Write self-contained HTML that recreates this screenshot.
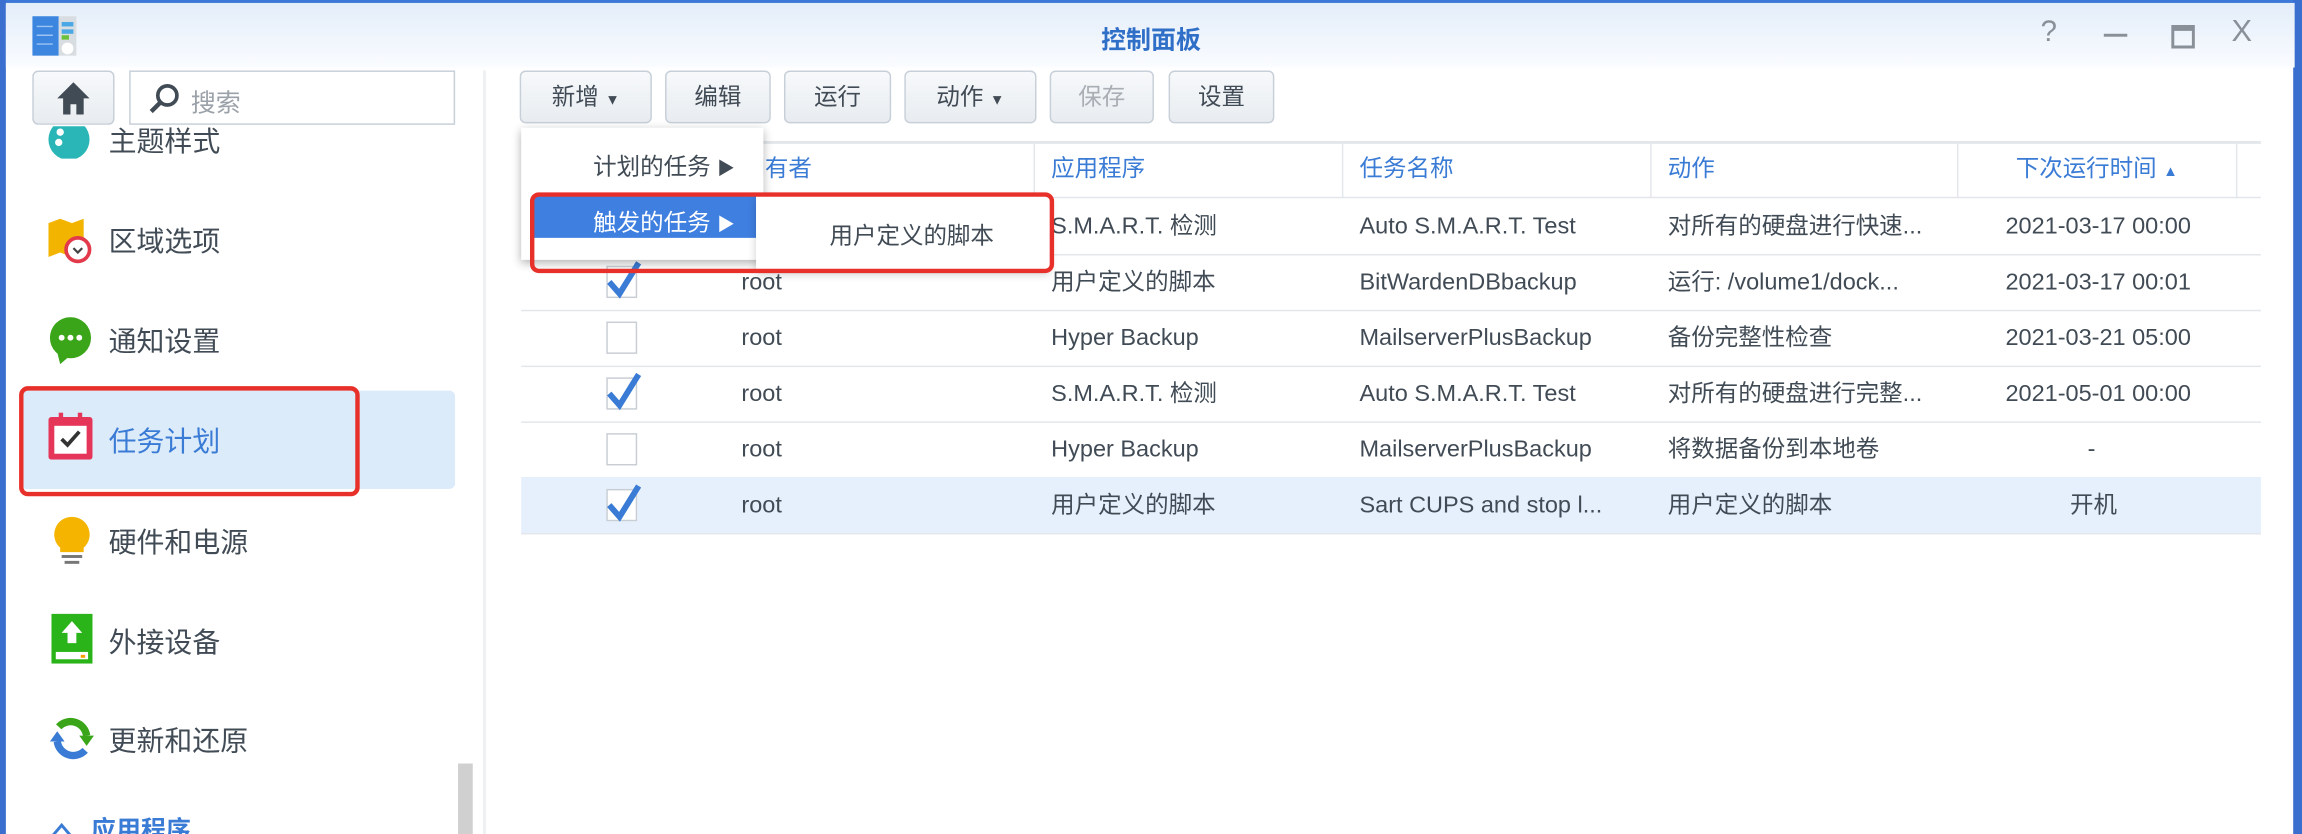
<!DOCTYPE html>
<html><head><meta charset="utf-8"><style>
html,body{margin:0;padding:0;width:2302px;height:834px;overflow:hidden;background:#fff}
#s{position:absolute;left:0;top:0;width:1568px;height:568px;transform:scale(1.46811,1.46831);transform-origin:0 0;font-family:"Liberation Sans","Noto Sans CJK SC",sans-serif;color:#414b55;background:#fff;overflow:hidden}
.a{position:absolute}
.tb{position:absolute;top:2px;left:4px;right:5px;height:44px;background:linear-gradient(#e3edf9,#fafcff)}
.btn{position:absolute;top:48px;height:36px;border:1px solid #c7cfd8;border-radius:4px;background:linear-gradient(#f7f9fb,#e8ecf0);font-size:16px;line-height:36px;text-align:center;color:#414b55;box-sizing:border-box}
.side{position:absolute;left:74px;font-size:19px;color:#414b55}
.hd{position:absolute;top:97px;height:38px;line-height:38px;font-size:16px;color:#3a7bd5}
.row{position:absolute;left:355px;width:1185px;height:38px;border-bottom:1px solid #e3e7eb;font-size:16px;line-height:40px}
.row span{position:absolute;white-space:nowrap}
.cb{position:absolute;left:58px;top:8px;width:21px;height:22px;border:1px solid #c8ced4;background:#fff;box-sizing:border-box}
.ck{position:absolute;left:56px;top:3px}
</style></head><body><div id="s">
<div class="a" style="left:0;top:0;width:1568px;height:3px;background:#3b78d8"></div>
<div class="a" style="left:0;top:0;width:4px;height:568px;background:#3a6fd0"></div>
<div class="a" style="right:0;top:0;width:6px;height:568px;background:#3a6fd0"></div>
<div class="tb"></div>
<svg class="a" style="left:22px;top:11px" width="32" height="27" viewBox="0 0 32 27"><rect x="0" y="0" width="18" height="27" fill="#3d86e0"/><rect x="18" y="0" width="12" height="27" fill="#d8dde2"/><rect x="20" y="4" width="8" height="3" fill="#4aa8e6"/><rect x="20" y="9" width="8" height="3" fill="#4aa8e6"/><rect x="20" y="13" width="5" height="3" fill="#6ac13c"/><circle cx="24" cy="22" r="4" fill="#fff"/><path d="M3 7h11M3 13h11M3 19h11" stroke="#9cc3f2" stroke-width="1"/></svg>
<div class="a" style="left:0;width:1568px;top:13px;text-align:center;font-size:17px;font-weight:bold;color:#2f6fc7">控制面板</div>
<div class="a" style="left:1390px;top:11px;font-size:20px;color:#8a9097">?</div>
<div class="a" style="left:1433px;top:23px;width:16px;height:2px;background:#8a9097"></div>
<div class="a" style="left:1479px;top:17px;width:12px;height:10px;border:2px solid #8a9097;border-top-width:4px"></div>
<div class="a" style="left:1520px;top:10px;font-size:21px;color:#8a9097">X</div>

<!-- sidebar -->
<div class="btn" style="left:22px;width:56px;top:48px;height:37px"><svg width="24" height="26" viewBox="0 0 24 26" style="margin-top:5px"><path d="M12 2L1 13h4v11h5v-7h4v7h5V13h4z" fill="#414b55"/></svg></div>
<div class="a" style="left:88px;top:48px;width:222px;height:37px;border:1px solid #c7cfd8;box-sizing:border-box;background:#fff"></div>
<svg class="a" style="left:100px;top:55px" width="24" height="24" viewBox="0 0 24 24"><circle cx="14" cy="10" r="6.5" fill="none" stroke="#414b55" stroke-width="2.5"/><path d="M9 15l-6 6" stroke="#414b55" stroke-width="3"/></svg>
<div class="a" style="left:130px;top:56px;font-size:17px;color:#9aa1a8">搜索</div>
<div class="a" style="left:12px;top:86px;width:300px;height:22px;overflow:hidden"><svg class="a" style="left:20px;top:-6px" width="30" height="30"><circle cx="15" cy="15" r="14" fill="#2ab5b6"/><circle cx="9" cy="10" r="2.5" fill="#fff"/><circle cx="8" cy="17" r="2.5" fill="#fff"/></svg><div class="a" style="left:62px;top:-4px;font-size:19px">主题样式</div></div>
<svg class="a" style="left:33px;top:148px" width="30" height="32"><path d="M0 4l8-3 8 3 8-3v16a8 8 0 0 0-8 8v2l-8-3-8 3z" fill="#f3b400"/><circle cx="20" cy="22" r="8" fill="#fff" stroke="#e23a4b" stroke-width="2.5"/><path d="M17 21l3 3 3-3" fill="none" stroke="#444" stroke-width="1.5"/></svg>
<div class="side" style="top:150px">区域选项</div>
<svg class="a" style="left:33px;top:216px" width="30" height="32"><ellipse cx="15" cy="14" rx="14" ry="14" fill="#3aa518"/><path d="M6 24l2 8 7-6z" fill="#3aa518"/><circle cx="9" cy="14" r="2" fill="#fff"/><circle cx="15" cy="14" r="2" fill="#fff"/><circle cx="21" cy="14" r="2" fill="#fff"/></svg>
<div class="side" style="top:218px">通知设置</div>
<div class="a" style="left:14px;top:266px;width:296px;height:67px;background:#dcebfa;border-radius:4px"></div>
<svg class="a" style="left:33px;top:281px" width="30" height="32"><rect x="0" y="3" width="30" height="29" rx="2" fill="#e5365a"/><rect x="4" y="9" width="22" height="19" fill="#fff"/><rect x="7" y="0" width="3" height="6" fill="#e5365a"/><rect x="20" y="0" width="3" height="6" fill="#e5365a"/><path d="M9 18l4 4 8-9" fill="none" stroke="#333" stroke-width="2.5"/></svg>
<div class="side" style="top:286px;color:#3a7bd5">任务计划</div>
<div class="a" style="left:13px;top:263px;width:226px;height:69px;border:3px solid #e8302a;border-radius:6px"></div>
<svg class="a" style="left:36px;top:351px" width="26" height="34"><path d="M13 1a12 12 0 0 1 8 21v3H5v-3A12 12 0 0 1 13 1z" fill="#f5b400"/><rect x="6" y="27" width="14" height="2" fill="#777"/><rect x="8" y="31" width="10" height="2" fill="#777"/></svg>
<div class="side" style="top:355px">硬件和电源</div>
<svg class="a" style="left:35px;top:418px" width="28" height="34"><rect width="28" height="34" fill="#2ab41a"/><path d="M14 5l-7 8h4v7h6v-7h4z" fill="#fff"/><rect x="3" y="26" width="22" height="5" fill="#fff"/><rect x="20" y="28" width="3" height="2" fill="#f5a000"/></svg>
<div class="side" style="top:423px">外接设备</div>
<svg class="a" style="left:33px;top:487px" width="32" height="32"><path d="M26 14A11 11 0 0 0 7 8" fill="none" stroke="#3aa518" stroke-width="5"/><path d="M21 14h10l-5 7z" fill="#3aa518"/><path d="M6 18a11 11 0 0 0 19 6" fill="none" stroke="#3a7bd5" stroke-width="5"/><path d="M1 18h10l-5-7z" fill="#3a7bd5"/></svg>
<div class="side" style="top:490px">更新和还原</div>
<svg class="a" style="left:34px;top:560px" width="16" height="10"><path d="M2 9l6-7 6 7" fill="none" stroke="#3a7bd5" stroke-width="2"/></svg>
<div class="a" style="left:62px;top:551px;font-size:17px;color:#3a7bd5;font-weight:bold">应用程序</div>
<div class="a" style="left:312px;top:520px;width:10px;height:48px;background:#d0d0d0"></div>
<div class="a" style="left:329px;top:48px;width:2px;height:520px;background:#eef0f2"></div>

<!-- toolbar -->
<div class="btn" style="left:354px;width:90px">新增 <span style="font-size:10px">▼</span></div>
<div class="btn" style="left:453px;width:72px">编辑</div>
<div class="btn" style="left:534px;width:73px">运行</div>
<div class="btn" style="left:616px;width:90px">动作 <span style="font-size:10px">▼</span></div>
<div class="btn" style="left:715px;width:71px;color:#a8aeb4">保存</div>
<div class="btn" style="left:796px;width:72px">设置</div>

<!-- table header -->
<div class="a" style="left:355px;top:96px;width:1185px;height:2px;background:#e3e7eb"></div>
<div class="a" style="left:355px;top:134px;width:1185px;height:1px;background:#e3e7eb"></div>
<div class="a" style="left:704px;top:97px;width:1px;height:38px;background:#e3e7eb"></div>
<div class="a" style="left:914px;top:97px;width:1px;height:38px;background:#e3e7eb"></div>
<div class="a" style="left:1124px;top:97px;width:1px;height:38px;background:#e3e7eb"></div>
<div class="a" style="left:1333px;top:97px;width:1px;height:38px;background:#e3e7eb"></div>
<div class="a" style="left:1523px;top:97px;width:1px;height:38px;background:#e3e7eb"></div>
<div class="hd" style="left:505px">拥有者</div>
<div class="hd" style="left:716px">应用程序</div>
<div class="hd" style="left:926px">任务名称</div>
<div class="hd" style="left:1136px">动作</div>
<div class="hd" style="left:1373px">下次运行时间 <span style="font-size:10px">▲</span></div>

<div class="row" style="top:135px"><span style="left:150px">root</span><span style="left:361px">S.M.A.R.T. 检测</span><span style="left:571px">Auto S.M.A.R.T. Test</span><span style="left:781px">对所有的硬盘进行快速...</span><span style="left:1011px">2021-03-17 00:00</span></div>
<div class="row" style="top:173px"><div class="cb"></div><svg class="ck" width="26" height="28"><path d="M4 16l7 8L24 3" fill="none" stroke="#3a7bd5" stroke-width="4"/></svg><span style="left:150px">root</span><span style="left:361px">用户定义的脚本</span><span style="left:571px">BitWardenDBbackup</span><span style="left:781px">运行: /volume1/dock...</span><span style="left:1011px">2021-03-17 00:01</span></div>
<div class="row" style="top:211px"><div class="cb"></div><span style="left:150px">root</span><span style="left:361px">Hyper Backup</span><span style="left:571px">MailserverPlusBackup</span><span style="left:781px">备份完整性检查</span><span style="left:1011px">2021-03-21 05:00</span></div>
<div class="row" style="top:249px"><div class="cb"></div><svg class="ck" width="26" height="28"><path d="M4 16l7 8L24 3" fill="none" stroke="#3a7bd5" stroke-width="4"/></svg><span style="left:150px">root</span><span style="left:361px">S.M.A.R.T. 检测</span><span style="left:571px">Auto S.M.A.R.T. Test</span><span style="left:781px">对所有的硬盘进行完整...</span><span style="left:1011px">2021-05-01 00:00</span></div>
<div class="row" style="top:287px"><div class="cb"></div><span style="left:150px">root</span><span style="left:361px">Hyper Backup</span><span style="left:571px">MailserverPlusBackup</span><span style="left:781px">将数据备份到本地卷</span><span style="left:1067px">-</span></div>
<div class="row" style="top:325px;background:#e5f0fc"><div class="cb"></div><svg class="ck" width="26" height="28"><path d="M4 16l7 8L24 3" fill="none" stroke="#3a7bd5" stroke-width="4"/></svg><span style="left:150px">root</span><span style="left:361px">用户定义的脚本</span><span style="left:571px">Sart CUPS and stop l...</span><span style="left:781px">用户定义的脚本</span><span style="left:1055px">开机</span></div>

<!-- dropdown -->
<div class="a" style="left:355px;top:87px;width:165px;height:90px;background:#fff;box-shadow:0 2px 6px rgba(0,0,0,.3)"></div>
<div class="a" style="left:404px;top:100px;font-size:16px">计划的任务 <span style="font-size:12px">▶</span></div>
<div class="a" style="left:363px;top:133px;width:152px;height:29px;background:#3f7fe0"></div>
<div class="a" style="left:404px;top:138px;font-size:16px;color:#fff">触发的任务 <span style="font-size:12px">▶</span></div>
<div class="a" style="left:515px;top:133px;width:200px;height:52px;background:#fff;box-shadow:0 2px 6px rgba(0,0,0,.2)"></div>
<div class="a" style="left:565px;top:147px;font-size:16px">用户定义的脚本</div>
<div class="a" style="left:361px;top:131px;width:351px;height:49px;border:3px solid #e8302a;border-radius:6px"></div>
</div></body></html>
